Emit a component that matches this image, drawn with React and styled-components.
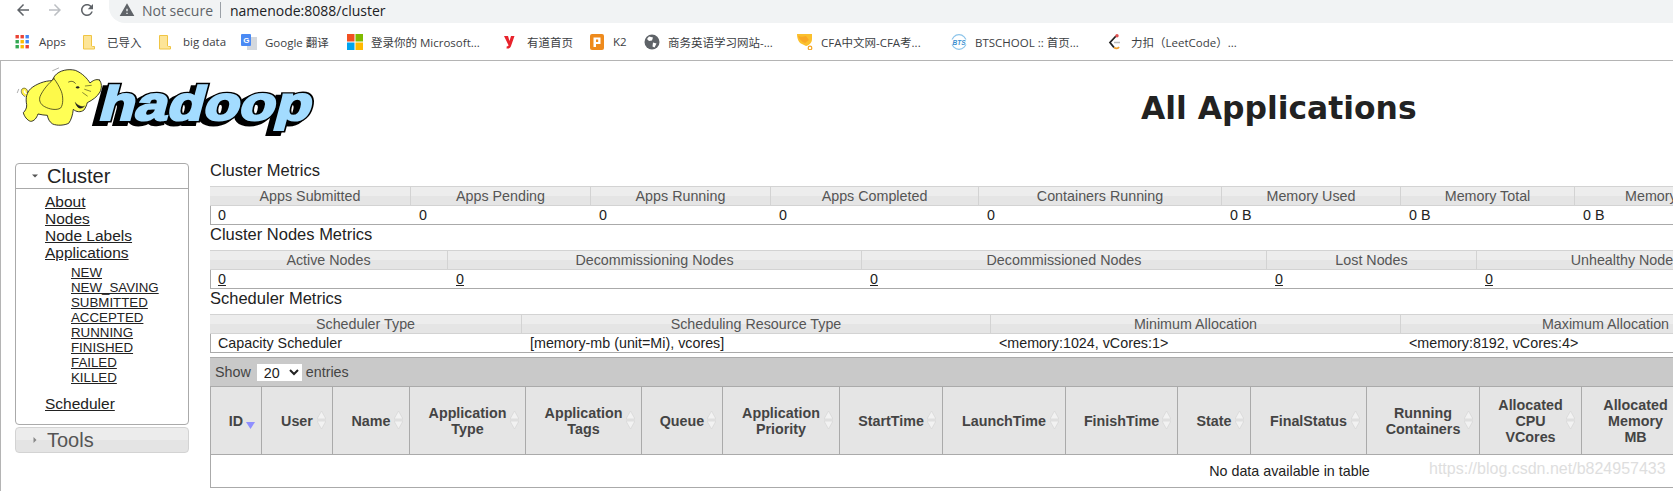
import React from 'react'
import styled, { createGlobalStyle } from 'styled-components'

const GlobalStyle = createGlobalStyle`
  html, body {
    margin: 0;
    padding: 0;
    background: #fff;
    overflow: hidden;
  }
  * {
    box-sizing: border-box;
  }
`

const Screen = styled.div`
  width: 1673px;
  height: 491px;
  overflow: hidden;
  font-family: 'Liberation Sans', sans-serif;
`

/* browser chrome */
const AddressRow = styled.div`
  display: flex;
  align-items: flex-start;
  height: 23px;
  padding-left: 14px;
`

const NavIcon = styled.svg`
  width: 18px;
  height: 18px;
  margin: 1px 14px 0 0;
  fill: ${props => (props.$off ? '#bcbfc3' : '#5f6368')};
`

const AddressBar = styled.div`
  flex: 1;
  display: flex;
  align-items: center;
  height: 23px;
  margin-left: -1px;
  padding: 0 0 3px 10px;
  background: #f1f3f4;
  border-bottom-left-radius: 16px;
  font-family: 'Open Sans', sans-serif;
  font-size: 14px;
`

const WarnIcon = styled.svg`
  width: 16px;
  height: 16px;
  fill: #5f6368;
  margin-right: 7px;
`

const NotSecure = styled.span`
  color: #5f6368;
`

const Divider = styled.span`
  width: 1px;
  height: 16px;
  background: #9aa0a6;
  margin: 0 9px 0 7px;
`

const Url = styled.span`
  color: #202124;
`

const BookmarkRow = styled.div`
  display: flex;
  align-items: center;
  height: 38px;
  padding-left: 15px;
  border-bottom: 1px solid #b4b4b4;
`

const Bookmark = styled.div`
  display: flex;
  align-items: center;
  flex: none;
  width: ${props => props.$w}px;
  white-space: nowrap;
  font-family: 'Open Sans', 'Noto Sans CJK SC', sans-serif;
  font-size: 11.5px;
  color: #3c4043;
`

const BookmarkIcon = styled.svg`
  flex: none;
  width: 16px;
  height: 16px;
  margin-right: 8px;
`

/* hadoop page */
const Page = styled.div`
  height: 430px;
  border-left: 1px solid #b4b4b4;
`

const Header = styled.div`
  display: flex;
  height: 100px;
`

const Logo = styled.svg`
  flex: none;
  width: 330px;
  height: 90px;
`

const Title = styled.h1`
  margin: 27px 0 0 810px;
  font-family: 'DejaVu Sans', sans-serif;
  font-size: 31.4px;
  line-height: 40px;
  font-weight: bold;
  color: #222;
  white-space: nowrap;
`

const Body = styled.div`
  display: flex;
  height: 330px;
`

const Sidebar = styled.div`
  flex: none;
  width: 209px;
  padding: 2px 21px 0 14px;
`

const Panel = styled.div`
  height: 262px;
  border: 1px solid #aaa;
  border-radius: 4px;
`

const PanelHead = styled.div`
  display: flex;
  align-items: center;
  height: 25px;
  padding-left: 15px;
  border-bottom: 1px solid #aaa;
  font-size: 20px;
  color: #222;
`

const ClosedPanel = styled(PanelHead)`
  height: 26px;
  margin-top: 2px;
  border: 1px solid #d3d3d3;
  border-radius: 4px;
  background: linear-gradient(#ececec 0, #ececec 50%, #e4e4e4 50%, #e4e4e4 100%);
  color: #555;
`

const Caret = styled.svg`
  flex: none;
  width: 8px;
  height: 8px;
  margin-right: 8px;
  fill: #555;
`

const Nav = styled.div`
  padding: 4px 0 0 29px;
  font-size: 15.5px;
  line-height: 17px;
`

const NavLink = styled.a`
  display: block;
  color: #222;
  text-decoration: underline;
  margin-top: ${props => props.$top || 0}px;
`

const SubNav = styled.div`
  padding: 4px 0 0 26px;
  font-size: 13.3px;
  line-height: 15px;
`

const Main = styled.div`
  flex: 1;
  min-width: 0;
  overflow: hidden;
`

const MetricsTitle = styled.div`
  height: 25px;
  font-size: 16.5px;
  line-height: 18px;
  color: #222;
  white-space: nowrap;
`

const MetricsTable = styled.table`
  table-layout: fixed;
  width: ${props => props.$w}px;
  height: 39px;
  border-collapse: separate;
  border-spacing: 0;
  font-size: 14.3px;
`

const Col = styled.col`
  width: ${props => props.$w}px;
`

const MetricsHead = styled.th`
  height: 20px;
  padding: 0;
  font-weight: normal;
  text-align: center;
  color: #555;
  white-space: nowrap;
  border-top: 1px solid #d3d3d3;
  border-right: 1px solid #d3d3d3;
  border-bottom: 1px solid #d3d3d3;
  background: linear-gradient(#ededed 0, #ededed 50%, #e5e5e5 50%, #e5e5e5 100%);
`

const MetricsCell = styled.td`
  height: 19px;
  padding: 0 0 0 8px;
  color: #222;
  white-space: nowrap;
  border-bottom: 1px solid #aaa;
  &:first-child {
    border-left: 1px solid #aaa;
    padding-left: 7px;
  }
  a {
    color: #222;
    text-decoration: underline;
  }
`

const Apps = styled.div`
  position: relative;
  margin-top: 4px;
`

const Toolbar = styled.div`
  display: flex;
  align-items: center;
  height: 30px;
  padding-left: 5px;
  background: #c9c9c9;
  border-top: 1px solid #aaa;
  border-bottom: 1px solid #aaa;
  font-size: 14.3px;
  color: #444;
`

const PageSize = styled.select`
  width: 45px;
  height: 17px;
  margin: 0 4px 0 6px;
  padding: 0 0 0 3px;
  border: none;
  background: #fff;
  font-family: 'Liberation Sans', sans-serif;
  font-size: 14.3px;
  color: #222;
`

const AppsTable = styled.table`
  table-layout: fixed;
  width: 2158px;
  border-collapse: separate;
  border-spacing: 0;
  font-size: 14.3px;
`

const AppsHead = styled.th`
  position: relative;
  height: 68px;
  padding: 0 6px;
  line-height: 16px;
  font-weight: bold;
  text-align: center;
  color: #444;
  background: #e5e5e5;
  border-right: 1px solid #aaa;
  border-bottom: 1px solid #aaa;
  &:first-child {
    border-left: 1px solid #aaa;
  }
`

const SortIcon = styled.svg`
  position: absolute;
  top: 24px;
  right: 6px;
  width: 9px;
  height: 18px;
`

const EmptyCell = styled.td`
  height: 33px;
  text-align: center;
  color: #222;
  border-left: 1px solid #aaa;
  border-bottom: 1px solid #aaa;
`

const Watermark = styled.div`
  position: absolute;
  top: 103px;
  left: 1219px;
  font-size: 16px;
  line-height: 18px;
  color: #dedede;
  white-space: nowrap;
`

const backPath = 'M20 11H7.83l5.59-5.59L12 4l-8 8 8 8 1.41-1.41L7.83 13H20v-2z'
const reloadPath = 'M17.65 6.35C16.2 4.9 14.21 4 12 4c-4.42 0-7.99 3.58-7.99 8s3.57 8 7.99 8c3.73 0 6.84-2.55 7.73-6h-2.08c-.82 2.33-3.04 4-5.65 4-3.31 0-6-2.69-6-6s2.69-6 6-6c1.66 0 3.14.69 4.22 1.78L13 11h7V4l-2.35 2.35z'

const AppsGridIcon = () => {
  const colors = ['#ea4335', '#ea4335', '#4285f4', '#34a853', '#fbbc04', '#4285f4', '#34a853', '#fbbc04', '#ea4335']
  return (
    <BookmarkIcon viewBox="0 0 16 16">
      {colors.map((c, i) => (
        <rect key={i} x={0.5 + (i % 3) * 5} y={1 + Math.floor(i / 3) * 5} width="3.4" height="3.4" fill={c} />
      ))}
    </BookmarkIcon>
  )
}

const FolderIcon = () => (
  <BookmarkIcon viewBox="0 0 16 16">
    <path d="M0.500 1.500h8v10.500l1 .5h2v2.500h-11z" fill="#fde598" stroke="#f0c544" strokeWidth="1" />
  </BookmarkIcon>
)

const TranslateIcon = () => (
  <BookmarkIcon viewBox="0 0 16 16">
    <rect x="6" y="3" width="10" height="13" fill="#d4d8dd" />
    <rect x="0" y="0" width="10" height="12" rx="1" fill="#4a8af4" />
    <text x="2.200" y="9" fontSize="8" fontWeight="bold" fontFamily="Liberation Sans, sans-serif" fill="#fff">G</text>
  </BookmarkIcon>
)

const MicrosoftIcon = () => (
  <BookmarkIcon viewBox="0 0 16 16">
    <rect x="0" y="0" width="7.500" height="7.500" fill="#f25022" />
    <rect x="8.500" y="0" width="7.500" height="7.500" fill="#7fba00" />
    <rect x="0" y="8.500" width="7.500" height="7.500" fill="#00a4ef" />
    <rect x="8.500" y="8.500" width="7.500" height="7.500" fill="#ffb900" />
  </BookmarkIcon>
)

const YoudaoIcon = () => (
  <BookmarkIcon viewBox="0 0 16 16">
    <path d="M1 2h4l1.500 5L8 2h3.500L8 12c-.6 1.800-2 2.800-4.500 2.500l.3-2.300c1 .1 1.500-.2 1.700-1z" fill="#e8232c" />
  </BookmarkIcon>
)

const K2Icon = () => (
  <BookmarkIcon viewBox="0 0 16 16">
    <rect x="1" y="0" width="14" height="16" rx="2" fill="#ee8a1c" />
    <path d="M4.500 3.500h7v6.500h-4.500v3h-2.500zM7 5.500v2.500h2.200v-2.500z" fill="#fff" fillRule="evenodd" />
  </BookmarkIcon>
)

const GlobeIcon = () => (
  <BookmarkIcon viewBox="0 0 16 16">
    <circle cx="8" cy="8" r="7.500" fill="#5f6368" />
    <path d="M5 2.500l4 1-1 3-3 .5-2-2zM9 8.500l3.500 1-2 4-2-1z" fill="#fff" />
  </BookmarkIcon>
)

const BellIcon = () => (
  <BookmarkIcon viewBox="0 0 16 16">
    <path d="M0 0h15v5c0 4-3 6.500-6 7l-4-2C2 9 0 5 0 0z" fill="#fbc02d" />
    <path d="M1 2c3 1 5 1 8 0l3 4-4 3C5 8 2 5 1 2z" fill="#f9a825" />
    <circle cx="13" cy="14" r="1.800" fill="none" stroke="#f5a623" strokeWidth="1.200" />
  </BookmarkIcon>
)

const BtsIcon = () => (
  <BookmarkIcon viewBox="0 0 16 16">
    <circle cx="8" cy="8" r="7.300" fill="none" stroke="#8cc4ea" strokeWidth="1.200" />
    <rect x="0" y="5.500" width="16" height="5" fill="#fff" />
    <text x="8" y="10.500" textAnchor="middle" fontSize="6.500" fontWeight="bold" fontStyle="italic" fontFamily="Liberation Sans, sans-serif" fill="#3a8fd0">BTS</text>
  </BookmarkIcon>
)

const LeetcodeIcon = () => (
  <BookmarkIcon viewBox="0 0 16 16">
    <path d="M9 2L3 8.500l4 5" fill="none" stroke="#222" strokeWidth="1.800" />
    <path d="M7 13.500c2 1.500 4 1 5-.5" fill="none" stroke="#f0a030" strokeWidth="1.800" />
    <path d="M7 8.500h6" stroke="#bbb" strokeWidth="1.500" />
    <circle cx="10" cy="1.800" r="1.700" fill="#e05050" />
  </BookmarkIcon>
)

const bookmarks = [
  { w: 68, icon: <AppsGridIcon />, label: 'Apps' },
  { w: 76, icon: <FolderIcon />, label: '已导入' },
  { w: 82, icon: <FolderIcon />, label: 'big data' },
  { w: 106, icon: <TranslateIcon />, label: 'Google 翻译' },
  { w: 156, icon: <MicrosoftIcon />, label: '登录你的 Microsoft...' },
  { w: 86, icon: <YoudaoIcon />, label: '有道首页' },
  { w: 55, icon: <K2Icon />, label: 'K2' },
  { w: 153, icon: <GlobeIcon />, label: '商务英语学习网站-...' },
  { w: 154, icon: <BellIcon />, label: 'CFA中文网-CFA考...' },
  { w: 156, icon: <BtsIcon />, label: 'BTSCHOOL :: 首页...' },
  { w: 140, icon: <LeetcodeIcon />, label: '力扣（LeetCode）...' },
]

const subLinks = ['NEW', 'NEW_SAVING', 'SUBMITTED', 'ACCEPTED', 'RUNNING', 'FINISHED', 'FAILED', 'KILLED']

const clusterMetrics = {
  cols: [201, 180, 180, 208, 243, 179, 174, 218],
  heads: ['Apps Submitted', 'Apps Pending', 'Apps Running', 'Apps Completed', 'Containers Running', 'Memory Used', 'Memory Total', 'Memory Reserved'],
  cells: ['0', '0', '0', '0', '0', '0 B', '0 B', '0 B'],
}

const nodeMetrics = {
  cols: [238, 414, 405, 210, 298],
  heads: ['Active Nodes', 'Decommissioning Nodes', 'Decommissioned Nodes', 'Lost Nodes', 'Unhealthy Nodes'],
  cells: ['0', '0', '0', '0', '0'],
  linked: true,
}

const schedulerMetrics = {
  cols: [312, 469, 410, 410],
  heads: ['Scheduler Type', 'Scheduling Resource Type', 'Minimum Allocation', 'Maximum Allocation'],
  cells: ['Capacity Scheduler', '[memory-mb (unit=Mi), vcores]', '<memory:1024, vCores:1>', '<memory:8192, vCores:4>'],
}

const appColumns = [
  { w: 52, label: ['ID'], sorted: true },
  { w: 71, label: ['User'] },
  { w: 77, label: ['Name'] },
  { w: 116, label: ['Application', 'Type'] },
  { w: 116, label: ['Application', 'Tags'] },
  { w: 81, label: ['Queue'] },
  { w: 117, label: ['Application', 'Priority'] },
  { w: 103, label: ['StartTime'] },
  { w: 123, label: ['LaunchTime'] },
  { w: 112, label: ['FinishTime'] },
  { w: 73, label: ['State'] },
  { w: 116, label: ['FinalStatus'] },
  { w: 113, label: ['Running', 'Containers'] },
  { w: 102, label: ['Allocated', 'CPU', 'VCores'] },
  { w: 108, label: ['Allocated', 'Memory', 'MB'] },
  { w: 100, label: ['Reserved', 'CPU', 'VCores'] },
  { w: 108, label: ['Reserved', 'Memory', 'MB'] },
  { w: 90, label: ['% of', 'Queue'] },
  { w: 90, label: ['% of', 'Cluster'] },
  { w: 100, label: ['Progress'] },
  { w: 90, label: ['Tracking', 'UI'] },
  { w: 100, label: ['Blacklisted', 'Nodes'] },
]

const HadoopLogo = () => (
  <Logo viewBox="1 1 330 90">
    <g transform="translate(97 60) skewX(-15)" fontFamily="Liberation Sans, sans-serif" fontWeight="bold" fontSize="48">
      <text x="-4" y="3" textLength="212" lengthAdjust="spacingAndGlyphs" fill="#000" stroke="#000" strokeWidth="6">hadoop</text>
      <text x="0" y="0" textLength="212" lengthAdjust="spacingAndGlyphs" fill="#000" stroke="#000" strokeWidth="5">hadoop</text>
      <text x="0" y="0" textLength="212" lengthAdjust="spacingAndGlyphs" fill="#a3dcff" stroke="#a3dcff" strokeWidth="2.200">hadoop</text>
    </g>
    <g transform="translate(10 2) scale(0.3333)" stroke="#111" strokeLinejoin="round" strokeLinecap="round">
      <path d="M48 100C40 98 36 92 38 84C42 78 50 82 50 90" fill="none" stroke="#ffef4a" strokeWidth="7" />
      <path d="M45 104C34 98 31 88 36 81C43 75 54 80 53 92" fill="none" strokeWidth="1.500" />
      <path
        d="M268 54C258 50 248 56 240 63C232 50 218 34 196 25C176 20 148 24 134 42L126 56C105 56 78 66 62 80C50 92 46 108 50 128C51 138 46 146 40 152C42 162 52 176 62 178C72 178 80 168 84 156C94 158 104 160 112 160C114 170 118 180 128 186C142 192 164 190 176 184C184 174 188 158 190 142C198 150 212 152 222 144C228 136 230 128 232 122C248 114 262 104 270 90C276 78 276 62 268 54Z"
        fill="#ffff55"
        strokeWidth="2.500"
      />
      <path
        d="M132 50C116 64 98 84 90 104C86 116 92 128 104 134C118 142 140 146 152 138C160 128 160 104 154 88C148 74 140 60 132 50Z"
        fill="#fdf94a"
        strokeWidth="2"
      />
      <path d="M196 122C200 136 212 146 224 132C216 136 206 132 196 122Z" fill="#222" strokeWidth="1" />
      <path d="M176 60C184 56 192 58 196 64" fill="none" strokeWidth="2" />
      <ellipse cx="203" cy="76" rx="5" ry="3.500" fill="#222" stroke="none" />
      <path d="M226 72L244 70M224 82L242 88M218 92L232 102" fill="none" strokeWidth="1.500" />
      <path d="M128 26L146 18M22 92L26 82" fill="none" stroke="#888" strokeWidth="2" />
    </g>
  </Logo>
)

const Metrics = ({ title, data }) => {
  const total = data.cols.reduce((sum, w) => sum + w, 0)
  return (
    <div>
      <MetricsTitle>{title}</MetricsTitle>
      <MetricsTable $w={total}>
        <colgroup>
          {data.cols.map((w, i) => <Col key={i} $w={w} />)}
        </colgroup>
        <thead>
          <tr>
            {data.heads.map(head => <MetricsHead key={head}>{head}</MetricsHead>)}
          </tr>
        </thead>
        <tbody>
          <tr>
            {data.cells.map((cell, i) => (
              <MetricsCell key={i}>{data.linked ? <a href="#nodes">{cell}</a> : cell}</MetricsCell>
            ))}
          </tr>
        </tbody>
      </MetricsTable>
    </div>
  )
}

const SortMark = ({ sorted }) => (
  <SortIcon viewBox="0 0 9 18">
    {sorted ? (
      <path d="M0 11h9l-4.500 7z" fill="#8f8fff" />
    ) : (
      <path d="M4.500 0L9 8H0zM0 10h9L4.500 18z" fill="#f2f2f2" stroke="#d2d2d2" strokeWidth="0.600" />
    )}
  </SortIcon>
)

export default function App() {
  return (
    <Screen>
      <GlobalStyle />
      <AddressRow>
        <NavIcon viewBox="0 0 24 24"><path d={backPath} /></NavIcon>
        <NavIcon $off viewBox="0 0 24 24"><path d={backPath} transform="rotate(180 12 12)" /></NavIcon>
        <NavIcon viewBox="0 0 24 24"><path d={reloadPath} /></NavIcon>
        <AddressBar>
          <WarnIcon viewBox="0 0 24 24"><path d="M1 21h22L12 2 1 21zm12-3h-2v-2h2v2zm0-4h-2v-4h2v4z" /></WarnIcon>
          <NotSecure>Not secure</NotSecure>
          <Divider />
          <Url>namenode:8088/cluster</Url>
        </AddressBar>
      </AddressRow>
      <BookmarkRow>
        {bookmarks.map(b => (
          <Bookmark key={b.label} $w={b.w}>
            {b.icon}
            {b.label}
          </Bookmark>
        ))}
      </BookmarkRow>
      <Page>
        <Header>
          <HadoopLogo />
          <Title>All Applications</Title>
        </Header>
        <Body>
          <Sidebar>
            <Panel>
              <PanelHead>
                <Caret viewBox="0 0 8 8"><path d="M1 2.500h6L4 5.500z" /></Caret>
                Cluster
              </PanelHead>
              <Nav>
                <NavLink href="#about">About</NavLink>
                <NavLink href="#nodes">Nodes</NavLink>
                <NavLink href="#labels">Node Labels</NavLink>
                <NavLink href="#apps">Applications</NavLink>
                <SubNav>
                  {subLinks.map(link => <NavLink key={link} href={`#${link}`}>{link}</NavLink>)}
                </SubNav>
                <NavLink $top={10} href="#scheduler">Scheduler</NavLink>
              </Nav>
            </Panel>
            <ClosedPanel>
              <Caret viewBox="0 0 8 8"><path d="M2.500 1v6L5.500 4z" fill="#888" /></Caret>
              Tools
            </ClosedPanel>
          </Sidebar>
          <Main>
            <Metrics title="Cluster Metrics" data={clusterMetrics} />
            <Metrics title="Cluster Nodes Metrics" data={nodeMetrics} />
            <Metrics title="Scheduler Metrics" data={schedulerMetrics} />
            <Apps>
              <Toolbar>
                Show
                <PageSize defaultValue="20">
                  <option value="20">20</option>
                  <option value="40">40</option>
                  <option value="60">60</option>
                </PageSize>
                entries
              </Toolbar>
              <AppsTable>
                <colgroup>
                  {appColumns.map((col, i) => <Col key={i} $w={col.w} />)}
                </colgroup>
                <thead>
                  <tr>
                    {appColumns.map((col, i) => (
                      <AppsHead key={i}>
                        {col.label.map((line, j) => <div key={j}>{line}</div>)}
                        <SortMark sorted={col.sorted} />
                      </AppsHead>
                    ))}
                  </tr>
                </thead>
                <tbody>
                  <tr>
                    <EmptyCell colSpan={appColumns.length}>No data available in table</EmptyCell>
                  </tr>
                </tbody>
              </AppsTable>
              <Watermark>https://blog.csdn.net/b824957433</Watermark>
            </Apps>
          </Main>
        </Body>
      </Page>
    </Screen>
  )
}
